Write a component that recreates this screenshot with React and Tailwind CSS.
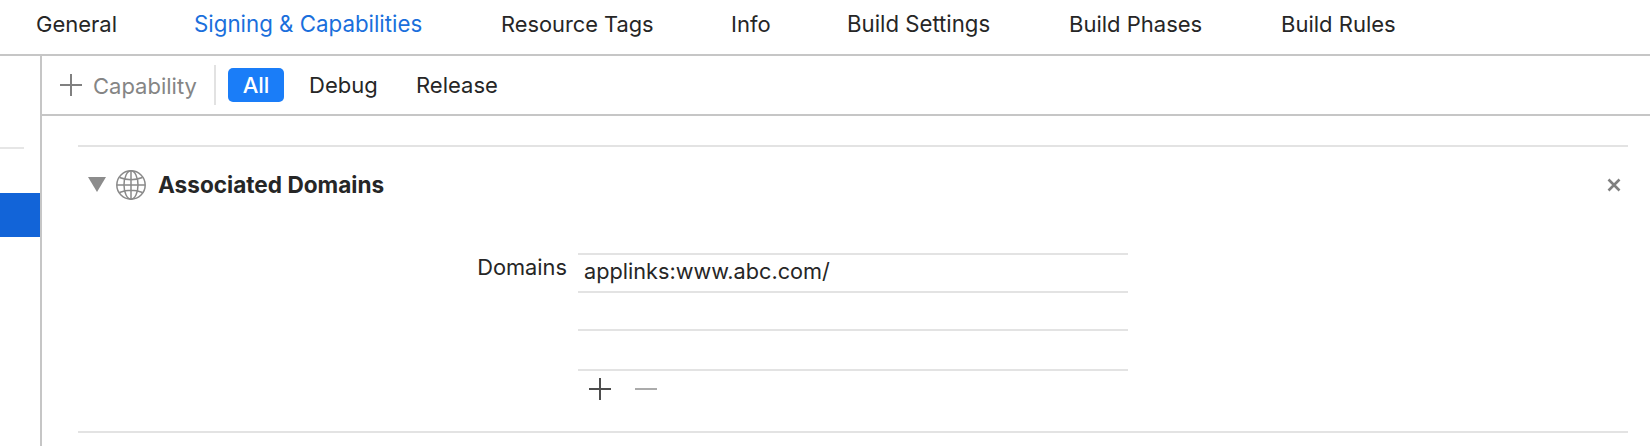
export default function App() {
  const tabs = [
    ["General", "w-[158px]", "text-[#262626]"],
    ["Signing & Capabilities", "w-[307px] text-[22.3px]", "text-[#1a6fdc]"],
    ["Resource Tags", "w-[230px] text-[21.8px]", "text-[#262626]"],
    ["Info", "w-[116px]", "text-[#262626]"],
    ["Build Settings", "w-[222px] text-[22.2px]", "text-[#262626]"],
    ["Build Phases", "w-[212px]", "text-[#262626]"],
    ["Build Rules", "", "text-[#262626]"],
  ];
  return (
    <div className="w-[1650px] h-[446px] overflow-hidden bg-white flex flex-col font-['Inter','Liberation_Sans',sans-serif] text-[#262626]">
      <div className="h-[56px] shrink-0 border-b-2 border-[#c6c6c6] flex items-start pl-[36px] pt-[10px] text-[22px] leading-[28px]">
        {tabs.map(([t, w, c]) => (
          <div key={t} className={`${w} ${c} shrink-0`}>{t}</div>
        ))}
      </div>
      <div className="flex-1 flex min-h-0">
        <div className="w-[42px] shrink-0 border-r-2 border-[#c6c6c6] flex flex-col">
          <div className="h-[93px] shrink-0 border-b-2 border-[#e6e6e6] w-[24px]" />
          <div className="h-[44px] mt-[44px] bg-[#1264d8] w-[40px]" />
        </div>
        <div className="flex-1 min-w-0 flex flex-col">
          <div className="h-[60px] shrink-0 border-b-2 border-[#c6c6c6] flex items-center pl-[18px]">
            <svg width="22" height="22" viewBox="0 0 22 22">
              <path d="M11 0v22M0 11h22" stroke="#808080" strokeWidth="2" />
            </svg>
            <span className="ml-[11px] text-[22px] leading-[30px] pt-[1px] text-[#858585] w-[121px]">Capability</span>
            <div className="w-[2px] h-[40px] bg-[#e2e2e2]" />
            <div className="ml-[12px] w-[56px] h-[34px] rounded-[5px] bg-[#1a7df8] text-white text-[22px] font-medium flex items-center justify-center">All</div>
            <span className="ml-[25px] w-[107px] text-[22px]">Debug</span>
            <span className="text-[22px]">Release</span>
          </div>
          <div className="flex-1 pl-[36px] pr-[22px] pt-[29px]">
            <div className="border-t-2 border-b-2 border-[#e3e3e3] h-[288px]">
              <div className="flex items-center pt-[23px] pl-[10px] h-[53px]">
                <svg width="18" height="15" viewBox="0 0 18 15" className="mt-[-1px]"><path d="M0 0h18L9 15z" fill="#8c8c8c" /></svg>
                <svg width="32" height="32" viewBox="0 0 32 32" className="ml-[9px] mt-[-1px]" fill="none" stroke="#8a8a8a" strokeWidth="1.5">
                  <circle cx="16" cy="16" r="14.2" />
                  <ellipse cx="16" cy="16" rx="7" ry="14.2" />
                  <path d="M16 2v28M2 16h28M4.5 8.5c7 2.6 16 2.6 23 0M4.5 23.5c7-2.6 16-2.6 23 0" />
                </svg>
                <span className="ml-[11px] text-[22.6px] font-bold">Associated Domains</span>
                <svg width="14" height="14" viewBox="0 0 14 14" className="ml-auto mr-[7px]"><path d="M1.5 1.5l11 11M12.5 1.5l-11 11" stroke="#808080" strokeWidth="2.6" /></svg>
              </div>
              <div className="flex mt-[53px]">
                <div className="w-[489px] text-right text-[21.8px] leading-[28px] shrink-0">Domains</div>
                <div className="ml-[11px] w-[550px]">
                  <div className="border-t-2 border-[#e3e3e3] h-[38px] pl-[6px] text-[21.7px] leading-[32px]">applinks:www.abc.com/</div>
                  <div className="border-t-2 border-[#e3e3e3] h-[38px]" />
                  <div className="border-t-2 border-[#e3e3e3] h-[40px]" />
                  <div className="border-t-2 border-[#e3e3e3] flex items-center pl-[11px] pt-[7px]">
                    <svg width="22" height="22" viewBox="0 0 22 22"><path d="M11 0v22M0 11h22" stroke="#4d4d4d" strokeWidth="2" /></svg>
                    <svg width="22" height="22" viewBox="0 0 22 22" className="ml-[24px]"><path d="M0 11h22" stroke="#ababab" strokeWidth="2" /></svg>
                  </div>
                </div>
              </div>
            </div>
          </div>
        </div>
      </div>
    </div>
  );
}
